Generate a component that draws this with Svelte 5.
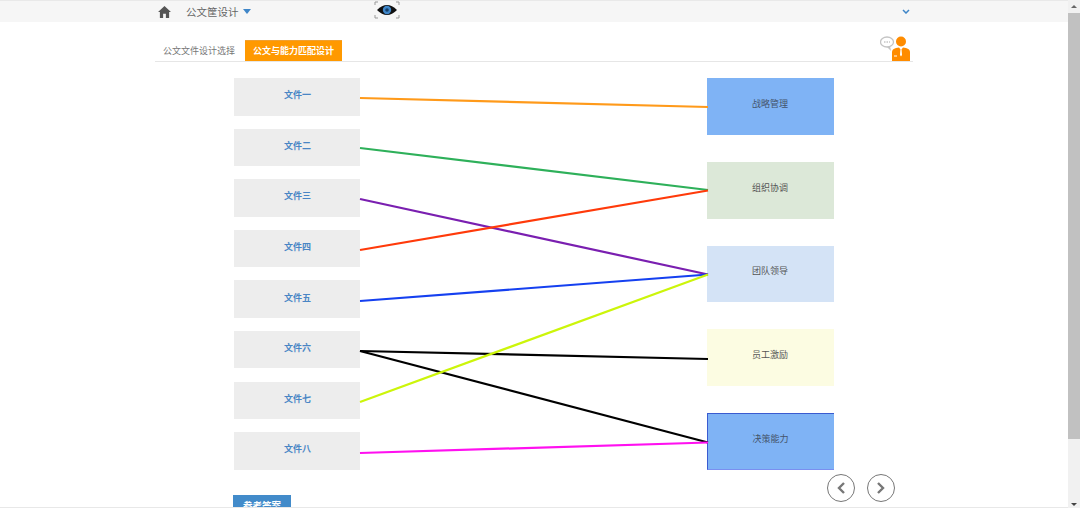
<script>
  const files = ["文件一", "文件二", "文件三", "文件四", "文件五", "文件六", "文件七", "文件八"];
  const skills = [
    { name: "战略管理", cls: "blue" },
    { name: "组织协调", cls: "green" },
    { name: "团队领导", cls: "pale" },
    { name: "员工激励", cls: "cream" },
    { name: "决策能力", cls: "blue edged" }
  ];
  const links = [
    { y1: 98, y2: 107, color: "#ff9a1a" },
    { y1: 148, y2: 190, color: "#2eb05a" },
    { y1: 199, y2: 274.5, color: "#7a1fb0" },
    { y1: 250, y2: 190.5, color: "#ff3a0a" },
    { y1: 301, y2: 274.5, color: "#1540f0" },
    { y1: 351, y2: 359, color: "#000" },
    { y1: 351, y2: 442.5, color: "#000" },
    { y1: 402, y2: 274.5, color: "#ccf50a" },
    { y1: 453, y2: 442.5, color: "#ff10f0" }
  ];
</script>

<div class="page">
  <main class="content">
    <header class="topbar">
      <div class="crumbs">
        <svg class="home" viewBox="0 0 14 13" width="13" height="12">
          <path d="M7 0 L14 6.5 L12 6.5 L12 13 L8.5 13 L8.5 8.5 L5.5 8.5 L5.5 13 L2 13 L2 6.5 L0 6.5 Z" fill="#555" />
        </svg>
        <span class="title">公文筐设计</span>
        <span class="caret"></span>
      </div>
      <div class="eye">
        <svg viewBox="0 0 26 18" width="26" height="18">
          <path d="M1 1 V4 M1 1 H4 M25 1 V4 M25 1 H22 M1 17 V14 M1 17 H4 M25 17 V14 M25 17 H22" stroke="#999" fill="none" />
          <path d="M3 9 Q13 -1 23 9 Q13 19 3 9 Z" fill="#111" />
          <circle cx="13" cy="9" r="4.2" fill="#3f86c8" />
          <circle cx="13" cy="9" r="1.8" fill="#16406b" />
        </svg>
      </div>
      <svg class="chevron" viewBox="0 0 8 5" width="8" height="5">
        <path d="M1 1 L4 4 L7 1" stroke="#3f86c8" stroke-width="1.5" fill="none" />
      </svg>
    </header>

    <nav class="tabs">
      <span class="tab">公文文件设计选择</span>
      <span class="tab active">公文与能力匹配设计</span>
      <svg class="agent" viewBox="0 0 32 26" width="32" height="26">
        <ellipse cx="7" cy="7" rx="6.5" ry="5" fill="#fff" stroke="#c4c4c4" stroke-width="1.3" />
        <path d="M7 12 L11 16 L10 11 Z" fill="#c4c4c4" />
        <path d="M4 7 H10" stroke="#aaa" stroke-dasharray="1.5 1" />
        <circle cx="21" cy="6.5" r="5" fill="#ff8c00" />
        <path d="M12 26 V17 Q12 14 16 13 L19 12.5 L21 15 L23 12.5 L26 13 Q30 14 30 17 V26 Z" fill="#ff8c00" />
        <path d="M20.4 14.5 H21.6 L22 20 L21 21.5 L20 20 Z" fill="#fff" />
        <path d="M14 21 H17" stroke="#fff" />
      </svg>
    </nav>

    <section class="board">
      <div class="col files">
        {#each files as f}
          <div class="file">{f}</div>
        {/each}
      </div>
      <div class="col skills">
        {#each skills as s}
          <div class="skill {s.cls}">{s.name}</div>
        {/each}
      </div>
      <svg class="wires" width="1068" height="508">
        {#each links as l}
          <line x1="360" y1={l.y1} x2="708" y2={l.y2} stroke={l.color} stroke-width="2.2" />
        {/each}
      </svg>
    </section>

    <button class="answer">参考答案</button>

    <div class="pager">
      <span class="round">
        <svg viewBox="0 0 10 14" width="10" height="14"><path d="M8 2 L3 7 L8 12" stroke="#777" stroke-width="2.4" fill="none" /></svg>
      </span>
      <span class="round">
        <svg viewBox="0 0 10 14" width="10" height="14"><path d="M2 2 L7 7 L2 12" stroke="#777" stroke-width="2.4" fill="none" /></svg>
      </span>
    </div>
  </main>

  <aside class="scrollbar">
    <span class="arrow up"></span>
    <div class="thumb"></div>
    <span class="arrow down"></span>
  </aside>
</div>

<style>
  :global(body) {
    margin: 0;
    background: #fff;
    overflow: hidden;
  }
  .page {
    display: flex;
    width: 1080px;
    height: 508px;
    overflow: hidden;
    font-family: "Liberation Sans", "Noto Sans CJK SC", sans-serif;
  }
  .content {
    position: relative;
    flex: 1;
    min-width: 0;
    height: 507px;
    border-bottom: 1px solid #e8e8e8;
    box-sizing: content-box;
    overflow: hidden;
  }
  .topbar {
    display: flex;
    align-items: center;
    height: 21px;
    background: #f6f6f6;
    border-top: 1px solid #e9e9e9;
  }
  .crumbs {
    display: flex;
    align-items: center;
    width: 216px;
    margin-left: 158px;
  }
  .title {
    margin-left: 15px;
    font-size: 10.5px;
    color: #666;
  }
  .caret {
    margin-left: 4px;
    border-left: 4.5px solid transparent;
    border-right: 4.5px solid transparent;
    border-top: 5px solid #3f86c8;
  }
  .eye {
    display: flex;
    width: 26px;
    height: 18px;
    margin-top: -3px;
  }
  .chevron {
    margin-left: 502px;
  }
  .tabs {
    display: flex;
    align-items: flex-end;
    height: 39px;
    width: 758px;
    margin-left: 155px;
    border-bottom: 1px solid #e6e6e6;
    position: relative;
  }
  .tab {
    padding: 0 7px 0 8px;
    line-height: 20px;
    font-size: 9px;
    color: #777;
  }
  .tab.active {
    margin-left: 3px;
    padding: 0 0;
    width: 97px;
    text-align: center;
    background: #ff9900;
    color: #fff;
    font-weight: bold;
    font-size: 9px;
    border-top: 1px solid #f0a030;
  }
  .agent {
    position: absolute;
    right: 1px;
    bottom: 0;
  }
  .board {
    display: flex;
    justify-content: space-between;
    width: 600px;
    margin: 16px 0 0 234px;
  }
  .col {
    display: flex;
    flex-direction: column;
  }
  .files {
    gap: 13.1px;
  }
  .file {
    display: flex;
    align-items: center;
    justify-content: center;
    width: 126px;
    height: 37.5px;
    padding: 0 0 4px 1px;
    box-sizing: border-box;
    background: #ededed;
    color: #4a86c5;
    font-size: 9px;
    font-weight: bold;
  }
  .skills {
    gap: 27px;
  }
  .skill {
    display: flex;
    align-items: center;
    justify-content: center;
    width: 127px;
    height: 56.75px;
    padding: 0 1px 6px 0;
    box-sizing: border-box;
    color: #555;
    font-size: 9px;
  }
  .blue {
    background: #7fb3f5;
    color: #44536b;
  }
  .green {
    background: #dce8d8;
  }
  .pale {
    background: #d4e3f6;
  }
  .cream {
    background: #fcfce2;
  }
  .edged {
    border: 1px solid #3a5bd0;
    border-right: none;
    border-bottom-color: #7a8ff0;
  }
  .wires {
    position: absolute;
    top: 0;
    left: 0;
    pointer-events: none;
  }
  .answer {
    position: absolute;
    left: 233px;
    top: 495px;
    width: 58px;
    height: 24px;
    padding: 0 0 4px;
    border: none;
    background: #428bca;
    color: #fff;
    font: bold 9.5px "Liberation Sans", "Noto Sans CJK SC", sans-serif;
  }
  .pager {
    position: absolute;
    left: 827px;
    top: 474px;
    display: flex;
    gap: 12px;
  }
  .round {
    display: flex;
    align-items: center;
    justify-content: center;
    width: 28px;
    height: 28px;
    box-sizing: border-box;
    border: 1px solid #777;
    border-radius: 50%;
    background: #fff;
  }
  .scrollbar {
    display: flex;
    flex-direction: column;
    align-items: center;
    width: 12px;
    background: #f1f1f1;
  }
  .thumb {
    width: 12px;
    height: 426px;
    background: #c1c1c1;
    margin-top: 5px;
  }
  .arrow {
    border-left: 3px solid transparent;
    border-right: 3px solid transparent;
  }
  .arrow.up {
    margin-top: 5px;
    border-bottom: 3px solid #666;
  }
  .arrow.down {
    margin-top: auto;
    margin-bottom: 2px;
    border-top: 3px solid #444;
  }
</style>
